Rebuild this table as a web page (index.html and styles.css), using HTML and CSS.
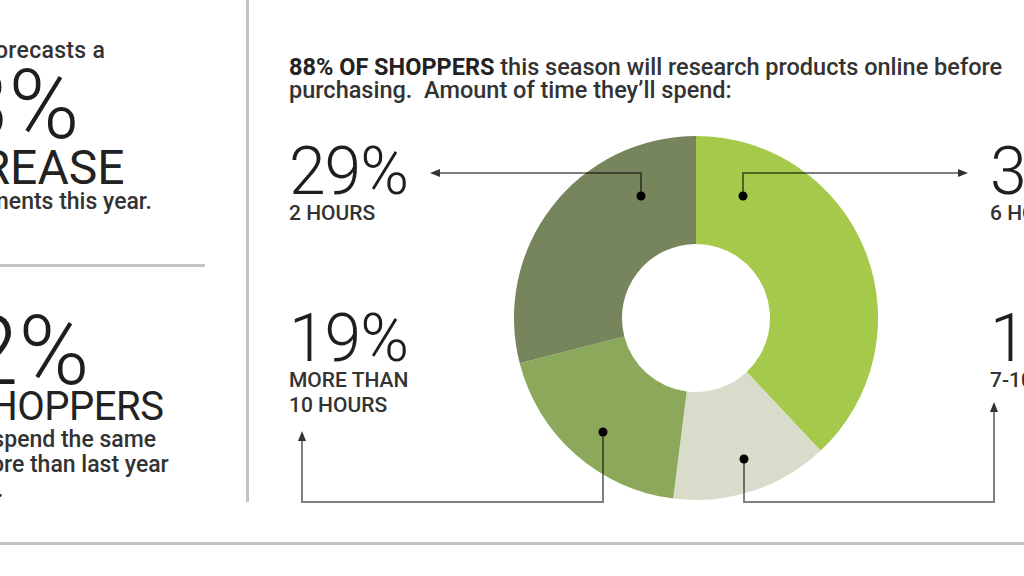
FILE: index.html
```html
<!DOCTYPE html>
<html lang="en">
<head>
<meta charset="utf-8">
<title>Holiday shopping infographic</title>
<link rel="stylesheet" href="styles.css">
</head>
<body>
<div class="page">
  <div class="main">
    <aside class="left">
      <div class="stat stat-one">
        <div class="lead">UPS forecasts a</div>
        <div class="num">13%</div>
        <div class="word">INCREASE</div>
        <div class="desc">in shipments this year.</div>
      </div>
      <hr class="sep">
      <div class="stat stat-two">
        <div class="num">52%</div>
        <div class="word word-sm">SHOPPERS</div>
        <div class="desc">
          <div class="line line-a">will spend the same</div>
          <div class="line line-b">or more than last year</div>
          <div class="line line-c">on gifts.</div>
        </div>
      </div>
    </aside>
    <div class="divider"></div>
    <section class="right">
      <p class="intro"><strong>88% OF SHOPPERS</strong> this season will research products online before<br>purchasing.&nbsp; Amount of time they’ll spend:</p>
      <div class="chart">
        <svg class="donut" viewBox="250 130 774 380" width="774" height="380" aria-hidden="true">
          <path d="M697,136 A182,182 0 0 1 821.6,450.7 L747.65,371.95 A74,74 0 0 0 697,244 Z" fill="#a5c94b"/>
          <path d="M821.6,450.7 A182,182 0 0 1 674.2,498.6 L687.73,391.4 A74,74 0 0 0 747.65,371.95 Z" fill="#d9dccb"/>
          <path d="M674.2,498.6 A182,182 0 0 1 520.7,363.3 L625.3,336.4 A74,74 0 0 0 687.73,391.4 Z" fill="#8ca95b"/>
          <path d="M520.7,363.3 A182,182 0 0 1 697,136 L697,244 A74,74 0 0 0 625.3,336.4 Z" fill="#77855c"/>
          <g fill="none" stroke="#000" stroke-opacity="0.5" stroke-width="2">
            <path d="M642,196 V173 H438"/>
            <path d="M744,196 V173 H962"/>
            <path d="M604,432 V502 H303 V438"/>
            <path d="M745,459 V502 H995 V409"/>
          </g>
          <g fill="#333">
            <polygon points="431,173 441,169 441,177"/>
            <polygon points="969,173 959,169 959,177"/>
            <polygon points="303,431 299,441 307,441"/>
            <polygon points="995,402 991,412 999,412"/>
          </g>
          <g fill="#000">
            <circle cx="642" cy="196" r="4.5"/>
            <circle cx="744" cy="196" r="4.5"/>
            <circle cx="604" cy="432" r="4.5"/>
            <circle cx="745" cy="459" r="4.5"/>
          </g>
        </svg>
        <div class="labels labels-left">
          <div class="label">
            <div class="pct">29%</div>
            <div class="cap">2 HOURS</div>
          </div>
          <div class="label">
            <div class="pct">19%</div>
            <div class="cap">MORE THAN<br>10 HOURS</div>
          </div>
        </div>
        <div class="labels labels-right">
          <div class="label">
            <div class="pct">38%</div>
            <div class="cap">6 HOURS</div>
          </div>
          <div class="label">
            <div class="pct">14%</div>
            <div class="cap">7-10 HOURS</div>
          </div>
        </div>
      </div>
    </section>
  </div>
</div>
</body>
</html>
```

FILE: styles.css
```css
html, body {
  margin: 0;
  padding: 0;
  background: #fff;
}

body {
  width: 1024px;
  height: 576px;
  overflow: hidden;
  font-family: Roboto, "Liberation Sans", sans-serif;
  color: #2b2b2b;
}

.page {
  display: flex;
  flex-direction: column;
  height: 576px;
}

.main {
  display: flex;
  height: 542px;
  border-bottom: 3px solid #c4c4c4;
  flex-shrink: 0;
}

/* left column: its text runs past the left edge of the view */
.left {
  width: 246px;
  flex-shrink: 0;
  overflow: hidden;
}

.stat {
  white-space: nowrap;
}

.stat-one {
  margin-left: -68px;
  padding-top: 39px;
}

.stat-two {
  margin-left: -34px;
  padding-top: 46px;
}

.lead {
  font-size: 23px;
  line-height: 24px;
  font-weight: 500;
  color: #333;
  margin-left: 4px;
  letter-spacing: 0.3px;
}

.desc {
  font-size: 23px;
  line-height: 24px;
  font-weight: 500;
  color: #333;
}

.stat-one .desc {
  margin-top: 2px;
  margin-left: -11px;
}

.stat-two .desc {
  margin-top: 3px;
  line-height: 25px;
}

.line-a { margin-left: -14px; }
.line-b { margin-left: -22px; }
.line-c { margin-left: -47px; }

.num {
  font-size: 96px;
  line-height: 76px;
  font-weight: 300;
  color: #1e1e1e;
  margin-top: 4px;
}

.stat-one .num {
  margin-left: -30px;
}

.stat-two .num {
  margin-top: 0;
  margin-left: -54px;
}

.word {
  font-size: 48px;
  line-height: 40px;
  font-weight: 400;
  color: #222;
  margin-top: 5px;
  margin-left: -30px;
}

.word-sm {
  font-size: 40px;
  line-height: 35px;
  letter-spacing: -0.5px;
  margin-top: 0;
  margin-left: 0;
}

.sep {
  width: 205px;
  height: 3px;
  margin: 50px 0 0 0;
  border: 0;
  background: #c4c4c4;
}

.divider {
  width: 3px;
  height: 502px;
  background: #c4c4c4;
  flex-shrink: 0;
}

/* right panel */
.right {
  flex: 1;
  padding-left: 40px;
  padding-top: 56px;
  min-width: 0;
}

.intro {
  margin: 0;
  font-size: 23.5px;
  line-height: 23px;
  font-weight: 500;
  color: #333;
  white-space: nowrap;
}

.intro strong {
  font-weight: 700;
  color: #222;
}

.chart {
  position: relative;
  height: 380px;
  margin-top: 28px;
  display: flex;
  justify-content: space-between;
}

.donut {
  position: absolute;
  left: -40px;
  top: 0;
}

.labels {
  position: relative;
  display: flex;
  flex-direction: column;
  gap: 80px;
  padding-top: 9px;
  white-space: nowrap;
}

.labels-right {
  width: 34px;
}

.pct {
  font-size: 66px;
  line-height: 66px;
  font-weight: 300;
  color: #1e1e1e;
  letter-spacing: -1px;
}

.cap {
  font-size: 21px;
  line-height: 25px;
  margin-top: -4px;
  font-weight: 500;
  color: #333;
}
```
